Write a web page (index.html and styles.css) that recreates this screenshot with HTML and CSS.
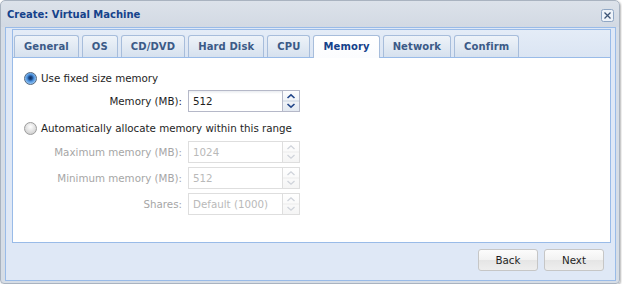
FILE: index.html
```html
<!DOCTYPE html>
<html>
<head>
<meta charset="utf-8">
<title>Create: Virtual Machine</title>
<link rel="stylesheet" href="styles.css">
</head>
<body>
<div class="window">
  <div class="win-header">
    <span class="title">Create: Virtual Machine</span>
    <span class="close">
      <svg width="13" height="13" viewBox="0 0 13 13">
        <rect x="0.5" y="0.5" width="12" height="12" rx="2" fill="#eef3f9" stroke="#8fa6c4"/>
        <path d="M3.5 3.5 L9.5 9.5 M9.5 3.5 L3.5 9.5" stroke="#3d5475" stroke-width="1.3" fill="none"/>
      </svg>
    </span>
  </div>
  <div class="win-body">
    <div class="tabpanel">
      <div class="tabstrip">
        <div class="tab">General</div>
        <div class="tab">OS</div>
        <div class="tab">CD/DVD</div>
        <div class="tab">Hard Disk</div>
        <div class="tab">CPU</div>
        <div class="tab active">Memory</div>
        <div class="tab">Network</div>
        <div class="tab">Confirm</div>
      </div>
      <div class="content">
        <div class="radio-row">
          <span class="radio on"></span>
          <span>Use fixed size memory</span>
        </div>
        <div class="field-row first">
          <span class="label">Memory (MB):</span>
          <span class="field">
            <span class="text">512</span>
            <span class="trigger">
              <svg width="16" height="20" viewBox="0 0 16 20">
                <line x1="0" y1="10" x2="16" y2="10" stroke="#c9d3e0"/>
                <polyline points="4.5,7 8,3.8 11.5,7" fill="none" stroke="#24478a" stroke-width="1.6"/>
                <polyline points="4.5,13 8,16.2 11.5,13" fill="none" stroke="#24478a" stroke-width="1.6"/>
              </svg>
            </span>
          </span>
        </div>
        <div class="radio-row second">
          <span class="radio off"></span>
          <span>Automatically allocate memory within this range</span>
        </div>
        <div class="field-row disabled">
          <span class="label">Maximum memory (MB):</span>
          <span class="field">
            <span class="text">1024</span>
            <span class="trigger">
              <svg width="16" height="20" viewBox="0 0 16 20">
                <line x1="0" y1="10" x2="16" y2="10" stroke="#ececec"/>
                <polyline points="4.5,7 8,3.8 11.5,7" fill="none" stroke="#cfd3da" stroke-width="1.3"/>
                <polyline points="4.5,13 8,16.2 11.5,13" fill="none" stroke="#cfd3da" stroke-width="1.3"/>
              </svg>
            </span>
          </span>
        </div>
        <div class="field-row disabled">
          <span class="label">Minimum memory (MB):</span>
          <span class="field">
            <span class="text">512</span>
            <span class="trigger">
              <svg width="16" height="20" viewBox="0 0 16 20">
                <line x1="0" y1="10" x2="16" y2="10" stroke="#ececec"/>
                <polyline points="4.5,7 8,3.8 11.5,7" fill="none" stroke="#cfd3da" stroke-width="1.3"/>
                <polyline points="4.5,13 8,16.2 11.5,13" fill="none" stroke="#cfd3da" stroke-width="1.3"/>
              </svg>
            </span>
          </span>
        </div>
        <div class="field-row disabled">
          <span class="label">Shares:</span>
          <span class="field">
            <span class="text">Default (1000)</span>
            <span class="trigger">
              <svg width="16" height="20" viewBox="0 0 16 20">
                <line x1="0" y1="10" x2="16" y2="10" stroke="#ececec"/>
                <polyline points="4.5,7 8,3.8 11.5,7" fill="none" stroke="#cfd3da" stroke-width="1.3"/>
                <polyline points="4.5,13 8,16.2 11.5,13" fill="none" stroke="#cfd3da" stroke-width="1.3"/>
              </svg>
            </span>
          </span>
        </div>
      </div>
    </div>
    <div class="footer">
      <span class="btn">Back</span>
      <span class="btn">Next</span>
    </div>
  </div>
</div>
</body>
</html>
```

FILE: styles.css
```css
* {
  box-sizing: border-box;
}

body {
  margin: 0;
  background: #ffffff;
  font-family: "DejaVu Sans", Verdana, sans-serif;
  font-size: 10.3px;
  color: #1e1e1e;
}

.window {
  width: 620px;
  height: 284px;
  border: 1px solid #a9b3c0;
  border-radius: 5px 5px 4px 4px;
  background: linear-gradient(#dce2ea, #d2d9e3 26px, #d6dde6 26px, #d6dde6);
  padding: 0 3px 2px 4px;
  display: flex;
  flex-direction: column;
  box-shadow: 1px 1px 2px rgba(0, 0, 0, 0.28);
}

.win-header {
  height: 26px;
  flex: none;
  display: flex;
  align-items: center;
  justify-content: space-between;
  padding: 0 2px;
}

.title {
  font-weight: bold;
  font-size: 10px;
  color: #15428b;
}

.close {
  display: block;
  width: 13px;
  height: 13px;
  margin-top: 3px;
}

.close svg {
  display: block;
}

.win-body {
  flex: 1;
  border: 1px solid #99bbe8;
  background: #dfe8f6;
  padding: 1px 4px 0 6px;
  display: flex;
  flex-direction: column;
}

.tabpanel {
  height: 214px;
  flex: none;
  border: 1px solid #99bbe8;
  display: flex;
  flex-direction: column;
}

.tabstrip {
  height: 28px;
  flex: none;
  display: flex;
  align-items: flex-start;
  gap: 3px;
  padding: 5px 0 0 1px;
  border-bottom: 1px solid #99bbe8;
  background: linear-gradient(#e4ecf7, #dbe5f3);
}

.tab {
  height: 22px;
  padding: 0 9px;
  border: 1px solid #a7bddb;
  border-bottom: none;
  border-radius: 3px 3px 0 0;
  background: linear-gradient(#eef3f9, #d6e1ee);
  font-weight: bold;
  font-size: 10px;
  letter-spacing: 0.12px;
  line-height: 21px;
  color: #3b5a87;
  white-space: nowrap;
}

.tab.active {
  height: 23px;
  margin-bottom: -1px;
  background: linear-gradient(#ffffff, #fbfcfe);
  color: #15428b;
}

.content {
  flex: 1;
  background: #ffffff;
  padding: 11px 11px;
}

.radio-row {
  display: flex;
  align-items: center;
  gap: 4px;
  height: 18px;
}

.radio-row.second {
  margin-top: 7px;
}

.radio {
  width: 13px;
  height: 13px;
  border-radius: 50%;
  flex: none;
}

.radio.on {
  border: 1px solid #55677d;
  background: radial-gradient(circle at 50% 45%, #0d2a59 0, #1d4c8c 1.8px, #4a8fdb 3.4px, #8cc0f2 5.6px);
}

.radio.off {
  border: 1px solid #9c9c9c;
  background: radial-gradient(circle at 50% 35%, #fefefe, #d3d3d3 75%);
}

.field-row {
  display: flex;
  align-items: center;
  height: 22px;
  margin-top: 4px;
}

.field-row.first {
  margin-top: 3px;
}

.label {
  width: 158px;
  text-align: right;
  margin-right: 6px;
  white-space: nowrap;
}

.field {
  display: flex;
  height: 22px;
}

.text {
  width: 95px;
  height: 22px;
  border: 1px solid #b5b8c8;
  padding: 0 4px;
  line-height: 20px;
  background: linear-gradient(#e9ecf0, #ffffff 3px);
  white-space: nowrap;
  overflow: hidden;
}

.trigger {
  width: 17px;
  height: 22px;
  border: 1px solid #b5b8c8;
  border-left: none;
  background: linear-gradient(#fdfdfe, #e3e9f1);
}

.trigger svg {
  display: block;
}

.disabled .label {
  color: #a6a6a6;
}

.disabled .text {
  border-color: #dedede;
  color: #b9b9b9;
  background: #ffffff;
}

.disabled .trigger {
  border-color: #dedede;
  background: linear-gradient(#ffffff, #f5f5f5);
}

.footer {
  display: flex;
  justify-content: flex-end;
  gap: 6px;
  padding: 6px 7px 0 0;
}

.btn {
  width: 60px;
  height: 22px;
  border: 1px solid #c6c6c6;
  border-radius: 3px;
  background: linear-gradient(#fcfcfc 0, #f2f2f2 50%, #e5e5e5 50%, #eeeeee 100%);
  text-align: center;
  line-height: 20px;
  color: #1e1e1e;
}
```
